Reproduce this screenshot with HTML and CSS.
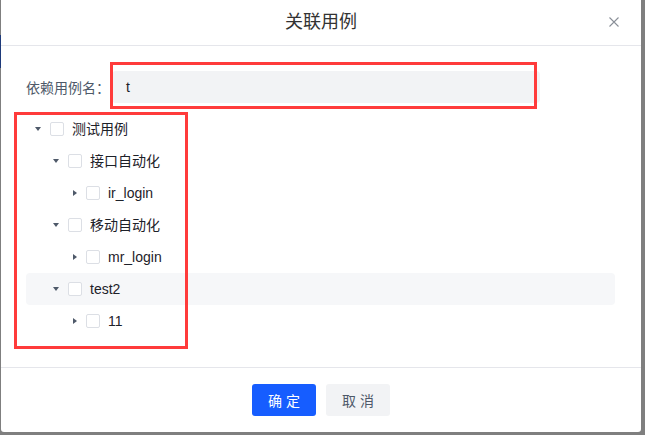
FILE: index.html
```html
<!DOCTYPE html>
<html lang="zh">
<head>
<meta charset="utf-8">
<title>关联用例</title>
<link rel="stylesheet" href="styles.css">
</head>
<body>
<div class="peek"></div>
<div class="modal">
  <div class="modal-header">
    <span></span>
    <span class="title">关联用例</span>
    <button class="close" aria-label="close">
      <svg width="10" height="10" viewBox="0 0 10 10"><path d="M0.5 0.5 L9.5 9.5 M9.5 0.5 L0.5 9.5" stroke="#8a8f98" stroke-width="1.1" fill="none"/></svg>
    </button>
  </div>
  <div class="modal-body">
    <div class="form-row">
      <label class="label">依赖用例名：</label>
      <div class="input">t</div>
    </div>
    <div class="tree">
      <div class="node">
        <span class="caret down"></span><span class="checkbox"></span><span class="text">测试用例</span>
      </div>
      <div class="node">
        <span class="indent"></span><span class="caret down"></span><span class="checkbox"></span><span class="text">接口自动化</span>
      </div>
      <div class="node">
        <span class="indent"></span><span class="indent"></span><span class="caret right"></span><span class="checkbox"></span><span class="text">ir_login</span>
      </div>
      <div class="node">
        <span class="indent"></span><span class="caret down"></span><span class="checkbox"></span><span class="text">移动自动化</span>
      </div>
      <div class="node">
        <span class="indent"></span><span class="indent"></span><span class="caret right"></span><span class="checkbox"></span><span class="text">mr_login</span>
      </div>
      <div class="node hover">
        <span class="indent"></span><span class="caret down"></span><span class="checkbox"></span><span class="text">test2</span>
      </div>
      <div class="node">
        <span class="indent"></span><span class="indent"></span><span class="caret right"></span><span class="checkbox"></span><span class="text">11</span>
      </div>
    </div>
  </div>
  <div class="modal-footer">
    <button class="btn primary">确定</button>
    <button class="btn secondary">取消</button>
  </div>
  <div class="mark mark-input"></div>
  <div class="mark mark-tree"></div>
</div>
</body>
</html>
```
FILE: styles.css
```css
* { box-sizing: border-box; }
html, body {
  margin: 0;
  padding: 0;
  width: 645px;
  height: 435px;
  overflow: hidden;
}
body {
  background: #7f7f7f;
  font-family: "Liberation Sans", "Noto Sans CJK SC", sans-serif;
  position: relative;
}
.peek {
  position: absolute;
  left: 0;
  top: 35px;
  width: 1px;
  height: 33px;
  background: #1e3a7a;
}
.modal {
  position: relative;
  margin-left: 1px;
  width: 640px;
  height: 432px;
  background: #fff;
  border-radius: 0 0 3px 3px;
  display: flex;
  flex-direction: column;
}
.modal-header {
  height: 46px;
  border-bottom: 1px solid #e5e6eb;
  display: grid;
  grid-template-columns: 1fr auto 1fr;
  align-items: center;
}
.title {
  font-size: 18px;
  color: #333;
  font-weight: 400;
  line-height: 24px;
  padding-bottom: 2px;
}
.close {
  justify-self: end;
  margin-right: 22px;
  border: 0;
  background: none;
  padding: 0;
  width: 10px;
  height: 10px;
  display: flex;
  margin-bottom: 2px;
}
.modal-body {
  flex: 1;
  padding: 25px 25px 0 25px;
}
.form-row {
  display: flex;
  align-items: center;
  height: 32px;
  margin-bottom: 10px;
}
.label {
  width: 86px;
  font-size: 14px;
  color: #4e5969;
}
.input {
  width: 428px;
  height: 32px;
  background: #f2f3f5;
  border-radius: 4px;
  padding-left: 14px;
  font-size: 14px;
  line-height: 32px;
  color: #1d2129;
}
.tree {
  width: 589px;
}
.node {
  height: 32px;
  display: flex;
  align-items: center;
  padding-left: 6px;
  border-radius: 4px;
  font-size: 14px;
  color: #1d2129;
}
.node.hover {
  background: #f6f7f9;
}
.indent {
  width: 18px;
  flex: none;
}
.caret {
  width: 12px;
  height: 12px;
  flex: none;
  margin-right: 6px;
  position: relative;
}
.caret::before {
  content: "";
  position: absolute;
  width: 0;
  height: 0;
}
.caret.down::before {
  left: 3px;
  top: 4px;
  border-left: 3.5px solid transparent;
  border-right: 3.5px solid transparent;
  border-top: 4px solid #4e5969;
}
.caret.right::before {
  left: 5px;
  top: 2.5px;
  border-top: 3.5px solid transparent;
  border-bottom: 3.5px solid transparent;
  border-left: 4px solid #4e5969;
}
.checkbox {
  width: 14px;
  height: 14px;
  flex: none;
  border: 1px solid #dcdfe5;
  border-radius: 2px;
  background: #fff;
  margin-right: 8px;
}
.text {
  line-height: 20px;
}
.modal-footer {
  height: 65px;
  border-top: 1px solid #e5e6eb;
  display: flex;
  justify-content: center;
  align-items: center;
  gap: 10px;
}
.btn {
  width: 64px;
  height: 32px;
  border: 0;
  border-radius: 3px;
  font-family: inherit;
  font-size: 14px;
  letter-spacing: 4px;
  padding: 0 0 0 4px;
  cursor: pointer;
}
.btn.primary {
  background: #165dff;
  color: #fff;
}
.btn.secondary {
  background: #f2f3f5;
  color: #4e5969;
}
.mark {
  position: absolute;
  border: 3px solid #ff3b3b;
  pointer-events: none;
}
.mark-input {
  left: 109px;
  top: 62px;
  width: 427px;
  height: 47px;
}
.mark-tree {
  left: 13px;
  top: 112px;
  width: 174px;
  height: 237px;
}
```
